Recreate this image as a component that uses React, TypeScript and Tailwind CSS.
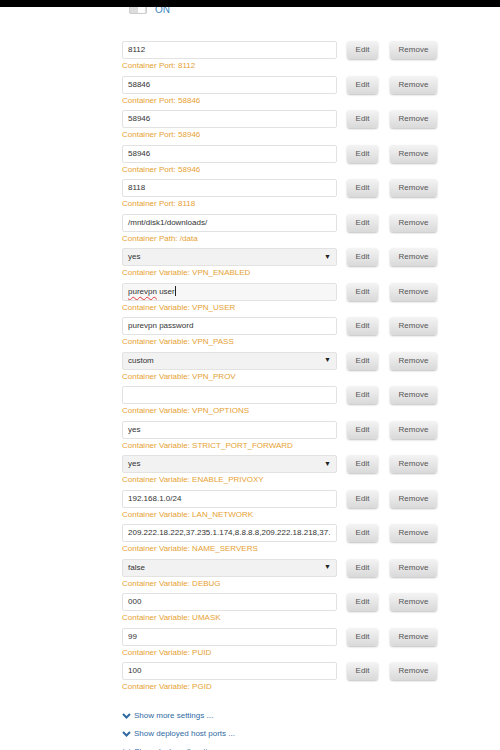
import React from "react";

type Row = {
  value: string;
  label: string;
  select?: boolean;
  focused?: boolean;
};

const rows: Row[] = [
  { value: "8112", label: "Container Port: 8112" },
  { value: "58846", label: "Container Port: 58846" },
  { value: "58946", label: "Container Port: 58946" },
  { value: "58946", label: "Container Port: 58946" },
  { value: "8118", label: "Container Port: 8118" },
  { value: "/mnt/disk1/downloads/", label: "Container Path: /data" },
  { value: "yes", label: "Container Variable: VPN_ENABLED", select: true },
  { value: "purevpn user", label: "Container Variable: VPN_USER", focused: true },
  { value: "purevpn password", label: "Container Variable: VPN_PASS" },
  { value: "custom", label: "Container Variable: VPN_PROV", select: true },
  { value: "", label: "Container Variable: VPN_OPTIONS" },
  { value: "yes", label: "Container Variable: STRICT_PORT_FORWARD" },
  { value: "yes", label: "Container Variable: ENABLE_PRIVOXY", select: true },
  { value: "192.168.1.0/24", label: "Container Variable: LAN_NETWORK" },
  {
    value: "209.222.18.222,37.235.1.174,8.8.8.8,209.222.18.218,37.",
    label: "Container Variable: NAME_SERVERS",
  },
  { value: "false", label: "Container Variable: DEBUG", select: true },
  { value: "000", label: "Container Variable: UMASK" },
  { value: "99", label: "Container Variable: PUID" },
  { value: "100", label: "Container Variable: PGID" },
];

const Chevron = () => (
  <svg width="9" height="6" viewBox="0 0 9 6" className="mr-[3px]">
    <path d="M1 1 L4.5 4.5 L8 1" stroke="#2f6aa3" strokeWidth="2" fill="none" />
  </svg>
);

function Btn({ children, w }: { children: React.ReactNode; w: string }) {
  return (
    <button
      className={`${w} h-[18px] rounded-[3px] bg-gradient-to-b from-[#f4f4f4] to-[#d9d9d9] text-[8px] text-[#555] shadow-[0_1px_2px_rgba(0,0,0,0.25)] flex items-center justify-center`}
    >
      {children}
    </button>
  );
}

function FieldRow({ row }: { row: Row }) {
  const bg = row.select ? "bg-[#f2f2f2]" : row.focused ? "bg-[#f7f7f7]" : "bg-white";
  return (
    <div className="h-[34.5px]">
      <div className="flex items-center h-[18px]">
        <div
          className={`w-[215px] h-[18px] ${bg} border border-[#e2e2e2] rounded-[2px] flex items-center px-[5px] text-[8px] text-[#333] overflow-hidden whitespace-nowrap`}
        >
          {row.focused ? (
            <span>
              <span className="underline decoration-wavy decoration-[#e03a3a] underline-offset-2">purevpn</span>{" "}
              user<span className="inline-block w-px h-[10px] bg-[#222] align-middle" />
            </span>
          ) : (
            <span className="flex-1">{row.value}</span>
          )}
          {row.select && <span className="text-[7px] text-[#222] ml-auto">▼</span>}
        </div>
        <div className="ml-[10px]">
          <Btn w="w-[31px]">Edit</Btn>
        </div>
        <div className="ml-[12px]">
          <Btn w="w-[47px]">Remove</Btn>
        </div>
      </div>
      <div className="text-[8px] leading-[13px] text-[#e6a133]">{row.label}</div>
    </div>
  );
}

export default function App() {
  return (
    <div className="relative w-[500px] h-[750px] overflow-hidden bg-white font-['Liberation_Sans',Arial,sans-serif]">
      <div className="absolute top-0 left-0 w-full h-[7px] bg-black z-10" />
      <div className="pl-[129px] pt-[4px] flex items-center h-[14px]">
        <div className="w-[18px] h-[10px] rounded-[2px] bg-[#ddd] border border-[#ccc] flex items-center justify-end pr-px">
          <div className="w-[7px] h-[7px] bg-white rounded-[1px]" />
        </div>
        <span className="ml-[8px] text-[10px] text-[#3d88c2]">ON</span>
      </div>
      <div className="pl-[122px] pt-[27px]">
        {rows.map((row, i) => (
          <FieldRow key={i} row={row} />
        ))}
        <div className="mt-[13px] flex flex-col gap-[6px] text-[8px] text-[#2f6aa3]">
          <div className="flex items-center h-[12px]">
            <Chevron />
            Show more settings ...
          </div>
          <div className="flex items-center h-[12px]">
            <Chevron />
            Show deployed host ports ...
          </div>
          <div className="flex items-center h-[12px]">
            <Chevron />
            Show docker allocations ...
          </div>
        </div>
      </div>
    </div>
  );
}
